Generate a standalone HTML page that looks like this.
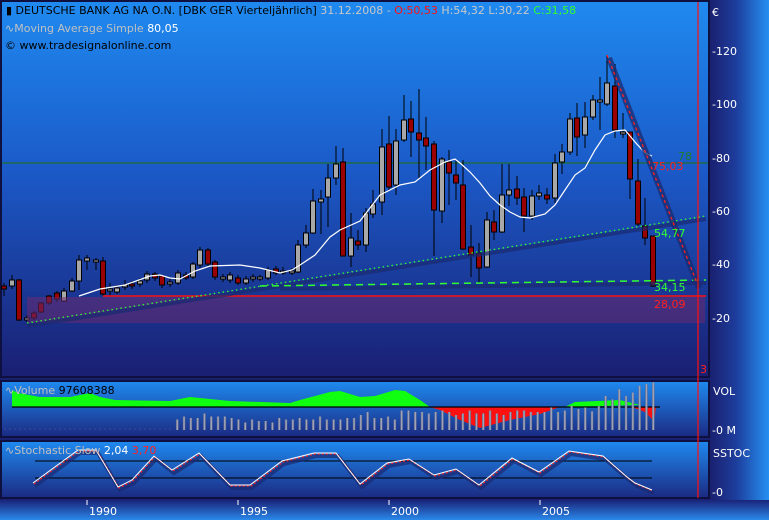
<!DOCTYPE html>
<html><head><meta charset="utf-8"><style>
body{margin:0;width:769px;height:520px;overflow:hidden;background:#1a2070;font-family:"Liberation Sans",sans-serif}
svg{display:block}
text{font-family:"DejaVu Sans","Liberation Sans",sans-serif;font-size:11px}
</style></head><body>
<svg width="769" height="520" viewBox="0 0 769 520" xmlns="http://www.w3.org/2000/svg">
<defs>
<linearGradient id="gm" x1="0" y1="0" x2="0" y2="1"><stop offset="0" stop-color="#1f8af0"/><stop offset="0.45" stop-color="#1b5ac8"/><stop offset="1" stop-color="#1a1f72"/></linearGradient>
<linearGradient id="gp" x1="0" y1="0" x2="0" y2="1"><stop offset="0" stop-color="#1f8af0"/><stop offset="1" stop-color="#1b2a82"/></linearGradient>
<linearGradient id="ga" x1="0" y1="0" x2="1" y2="0"><stop offset="0" stop-color="#1a1f6e"/><stop offset="0.45" stop-color="#1d3d9c"/><stop offset="1" stop-color="#2590f2"/></linearGradient>
<linearGradient id="gb" x1="0" y1="0" x2="0" y2="1"><stop offset="0" stop-color="#1a237a"/><stop offset="1" stop-color="#2a88ea"/></linearGradient>
<linearGradient id="gv" x1="0" y1="0" x2="1" y2="0"><stop offset="0" stop-color="#5a607e"/><stop offset="0.5" stop-color="#b0b4c8"/><stop offset="1" stop-color="#5a607e"/></linearGradient>
</defs>
<rect width="769" height="520" fill="#1a2070"/>
<rect x="709" y="0" width="60" height="500" fill="url(#ga)"/>
<rect x="0" y="500" width="769" height="20" fill="url(#gb)"/>
<rect x="1" y="1" width="708" height="376" fill="url(#gm)" stroke="#0e1040" stroke-width="2"/>
<line x1="2" y1="163" x2="708" y2="163" stroke="#1f6b30" stroke-width="1.2"/>
<g id="candles"></g>
<rect x="27" y="297" width="678" height="26" fill="#6a2a70" opacity="0.55"/>
<line x1="103" y1="296" x2="706" y2="296" stroke="#ff1010" stroke-width="1.5"/>
<polyline points="27,326 706,219" stroke="#1a2a70" stroke-width="4" fill="none" opacity="0.7"/>
<line x1="27" y1="323" x2="706" y2="216" stroke="#30ff30" stroke-width="1.3" stroke-dasharray="1.5,3"/>
<polyline points="280,289 706,283" stroke="#1a2a70" stroke-width="4" fill="none" opacity="0.7"/>
<line x1="260" y1="286" x2="706" y2="280" stroke="#30ff30" stroke-width="1.5" stroke-dasharray="7,5"/>
<polyline fill="none" stroke="#ffffff" stroke-width="1.2" points="79,296 100,289 125,285 150,276 160,275 170,278 180,279 195,271 210,266 240,265 260,268 280,273 292,270 300,265 315,255 330,237 340,230 360,221 380,195 400,185 415,182 430,170 445,162 455,159 460,163 470,172 480,183 490,196 500,205 510,212 520,217 530,218 545,214 555,205 565,190 575,175 585,168 595,150 605,135 615,131 625,130 635,142 645,153 652,156"/>
<line x1="609" y1="58" x2="699" y2="288" stroke="#1a2a70" stroke-width="6" opacity="0.75"/>
<line x1="607" y1="55" x2="697" y2="283" stroke="#ff2020" stroke-width="1.3" stroke-dasharray="3,3"/>
<text x="678" y="160" fill="#1f7a30" font-size="12">78</text>
<text x="652" y="170" fill="#ff2020" font-size="12">75,03</text>
<text x="654" y="237" fill="#30ff30" font-size="12">54,77</text>
<text x="654" y="291" fill="#30ff30" font-size="12">34,15</text>
<text x="654" y="308" fill="#ff2020" font-size="12">28,09</text>
<text x="700" y="373" fill="#ff2020">3</text>
<text x="6" y="14" fill="#000">▮ DEUTSCHE BANK AG NA O.N. [DBK GER  Vierteljährlich] <tspan fill="#c8c8c8">31.12.2008 - </tspan><tspan fill="#ff1010">O:50,53 </tspan><tspan fill="#c8c8c8">H:54,32 L:30,22 </tspan><tspan fill="#30ff30">C:31,58</tspan></text>
<text x="5" y="32" fill="#c0c0c0">∿Moving Average Simple <tspan fill="#fff">80,05</tspan></text>
<text x="5" y="49" fill="#000">© www.tradesignalonline.com</text>
<rect x="1" y="381" width="708" height="56" fill="url(#gp)" stroke="#0e1040" stroke-width="2"/>
<path d="M12,407 L12,390 L18,393 L40,397 L70,397 L90,393 L100,397 L115,400 L170,401 L190,397 L230,401 L290,403 L300,400 L330,392 L340,391 L360,397 L375,396 L395,390 L405,391 L420,400 L430,407 Z" fill="#10ff10"/>
<path d="M430,407 L440,410 L460,420 L480,428 L510,420 L540,414 L560,407 Z" fill="#ff1010"/>
<path d="M565,407 L575,402 L620,400 L640,405 Z" fill="#10ff10"/>
<path d="M632,407 L645,412 L654,421 L656,407 Z" fill="#ff1010"/>
<line x1="12" y1="407" x2="660" y2="407" stroke="#000" stroke-width="1.2"/>
<g id="vol"></g>
<line x1="4" y1="429" x2="172" y2="429" stroke="#3a4a90" stroke-dasharray="2,3"/>
<text x="5" y="394" fill="#c0c0c0">∿Volume <tspan fill="#000">97608388</tspan></text>
<rect x="1" y="441" width="708" height="57" fill="url(#gp)" stroke="#0e1040" stroke-width="2"/>
<line x1="35" y1="461" x2="652" y2="461" stroke="#000"/>
<line x1="35" y1="478" x2="652" y2="478" stroke="#000"/>
<polyline transform="translate(2,3)" fill="none" stroke="#1a2a70" stroke-width="4" opacity="0.7" points="33,483 78,450 96,450 118,487 132,480 154,456 172,470 199,453 230,485 250,485 282,461 314,453 336,453 360,484 387,463 409,459 434,475 456,469 479,485 512,458 539,472 569,451 603,456 627,477 635,483 652,490"/>
<polyline fill="none" stroke="#ff2020" stroke-width="1.2" stroke-dasharray="2,2" transform="translate(1,1)" points="33,483 78,450 96,450 118,487 132,480 154,456 172,470 199,453 230,485 250,485 282,461 314,453 336,453 360,484 387,463 409,459 434,475 456,469 479,485 512,458 539,472 569,451 603,456 627,477 635,483 652,490"/>
<polyline fill="none" stroke="#fff" stroke-width="1" points="33,483 78,450 96,450 118,487 132,480 154,456 172,470 199,453 230,485 250,485 282,461 314,453 336,453 360,484 387,463 409,459 434,475 456,469 479,485 512,458 539,472 569,451 603,456 627,477 635,483 652,490"/>
<text x="5" y="454" fill="#c0c0c0">∿Stochastic Slow <tspan fill="#fff">2,04 </tspan><tspan fill="#ff2020">3,70</tspan></text>
<line x1="698" y1="2" x2="698" y2="498" stroke="#ff1010" stroke-width="1.2"/>
<g fill="#fff" font-size="12">
<text x="712" y="16" font-size="12">€</text>
<text x="712" y="55">-120</text><text x="712" y="108">-100</text><text x="712" y="162">-80</text>
<text x="712" y="215">-60</text><text x="712" y="268">-40</text><text x="712" y="322">-20</text>
<text x="713" y="395">VOL</text><text x="712" y="434">-0 M</text>
<text x="713" y="457">SSTOC</text><text x="712" y="496">-0</text>
</g>
<g stroke="#fff"><line x1="87" y1="500" x2="87" y2="505"/><line x1="238" y1="500" x2="238" y2="505"/><line x1="389" y1="500" x2="389" y2="505"/><line x1="540" y1="500" x2="540" y2="505"/></g>
<g fill="#fff" font-size="12"><text x="89" y="515">1990</text><text x="240" y="515">1995</text><text x="391" y="515">2000</text><text x="542" y="515">2005</text></g>
</svg>
<script>
var C=[[4,286,289,283,296,1],[12,280,286,275,289,0],[19,280,320,279,321,1],[27,318,320,315,322,0],[34,313,318,311,320,1],[41,303,312,302,313,1],[49,296,303,295,305,1],[57,293,299,291,302,1],[64,291,301,288,302,0],[72,281,291,278,292,0],[79,260,281,255,290,0],[87,258,261,255,270,0],[96,260,262,258,270,0],[103,261,294,257,296,1],[110,289,291,283,296,0],[117,288,292,285,294,0],[125,285,287,280,290,0],[132,284,286,281,289,1],[140,281,284,278,287,0],[147,274,280,271,283,0],[155,274,278,272,281,1],[162,276,285,275,288,1],[170,282,284,279,287,0],[178,273,283,270,285,0],[186,275,278,272,280,1],[193,264,277,262,279,0],[200,250,265,247,268,0],[208,250,264,248,266,1],[215,262,277,260,280,1],[223,277,279,274,282,0],[230,275,280,272,283,0],[238,278,283,275,285,1],[246,279,283,276,285,0],[253,277,279,274,282,0],[260,277,279,275,281,0],[268,270,278,267,280,0],[276,269,273,266,275,1],[283,271,273,267,275,0],[292,271,273,268,275,0],[298,245,272,240,273,0],[306,233,245,225,248,0],[313,201,233,189,234,0],[321,199,202,190,234,0],[328,178,197,164,227,0],[336,164,178,146,185,0],[343,162,256,148,256,1],[351,238,256,213,267,0],[358,241,245,230,250,1],[366,213,245,208,252,0],[373,204,214,190,218,0],[382,147,202,129,215,0],[389,144,187,116,190,1],[396,141,185,129,195,0],[404,120,140,95,142,0],[411,119,132,101,157,1],[419,133,140,89,178,1],[426,138,146,117,170,1],[434,144,210,141,256,1],[442,159,211,157,223,0],[449,162,173,150,205,1],[456,175,183,160,200,1],[463,185,249,160,250,1],[471,247,255,225,277,1],[479,253,268,243,283,1],[487,220,267,212,268,0],[494,222,232,210,240,1],[502,195,232,164,233,0],[509,190,195,164,206,0],[517,189,198,176,205,1],[524,197,216,188,232,1],[532,196,216,190,220,0],[539,193,196,185,200,0],[547,195,199,188,204,1],[555,163,198,154,203,0],[562,152,162,144,174,0],[570,119,152,113,155,0],[577,118,137,103,156,1],[585,117,135,102,148,0],[593,100,117,95,120,0],[600,100,102,77,130,0],[607,83,104,55,106,0],[615,86,130,64,138,1],[623,132,134,113,138,0],[630,132,179,132,199,1],[638,181,224,159,226,1],[645,226,238,198,245,1],[653,236,286,236,287,1]];
var s='';
C.forEach(function(c){var x=c[0];s+='<line x1="'+x+'" y1="'+c[3]+'" x2="'+x+'" y2="'+c[4]+'" stroke="#000" stroke-width="1"/>';
s+='<rect x="'+(x-2.5)+'" y="'+c[1]+'" width="5" height="'+Math.max(2,c[2]-c[1])+'" fill="'+(c[5]?'#9a0000':'#a8a8a8')+'" stroke="#000" stroke-width="1"/>';});
document.getElementById('candles').innerHTML=s;
var v='';var h=[14,18,16,16,22,18,18,18,16,14,10,14,12,12,10,16,14,14,16,14,14,18,14,14,14,16,16,20,24,16,16,18,14,26,26,24,24,22,24,26,24,20,22,26,22,22,26,22,20,24,26,26,24,24,24,30,24,26,32,28,30,22,28,40,36,48,40,44,52,54,56];
var sc=[0.75];
for(var i=0;i<h.length;i++){var x=176+i*6.8;var hh=h[i]*(i>60?0.85:0.75);v+='<rect x="'+x.toFixed(1)+'" y="'+(430-hh)+'" width="2.5" height="'+hh+'" fill="url(#gv)"/>';}
document.getElementById('vol').innerHTML=v;
</script>
</body></html>
